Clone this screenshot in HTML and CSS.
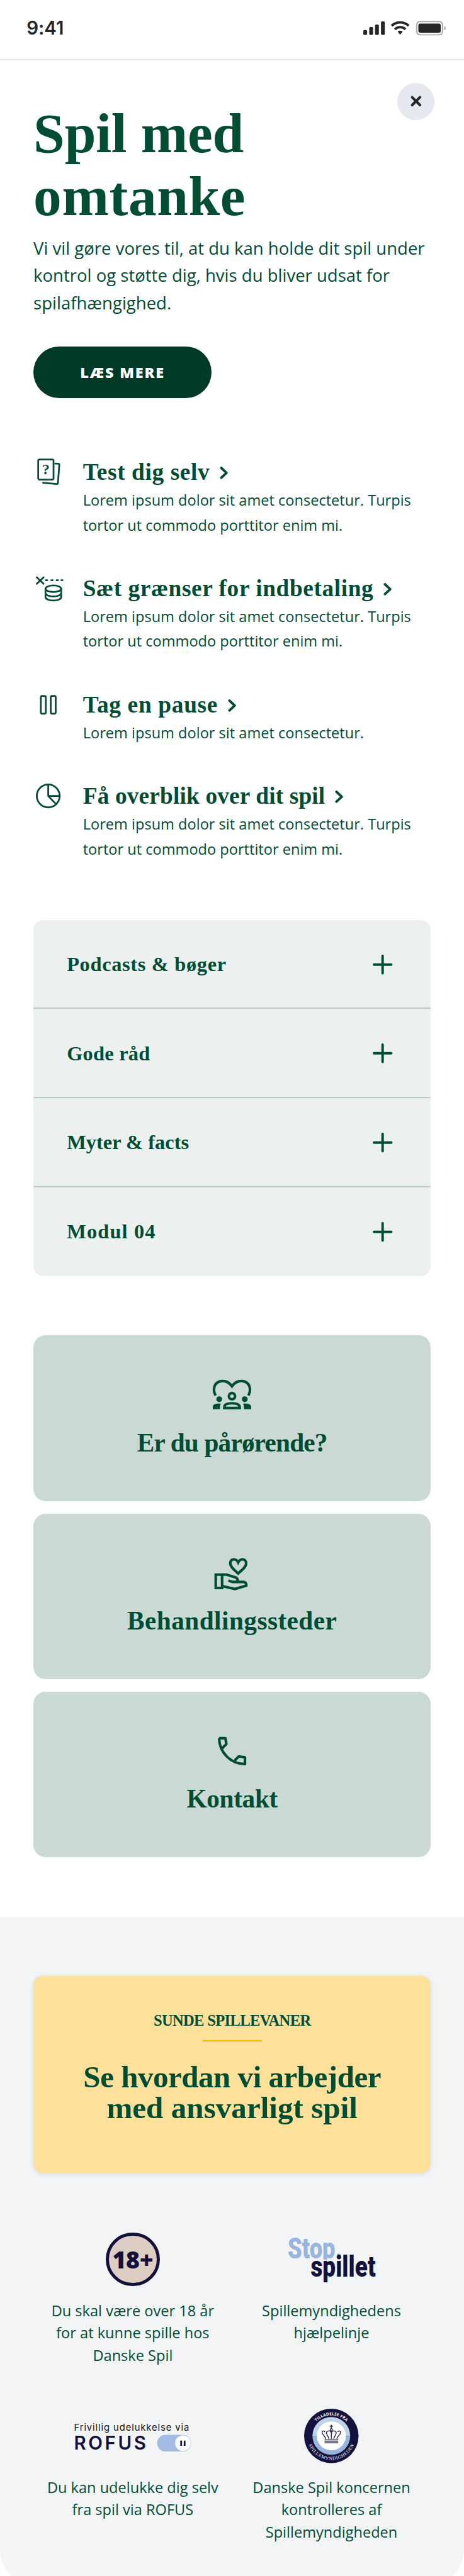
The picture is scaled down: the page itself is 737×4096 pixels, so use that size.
FILE: index.html
```html
<!DOCTYPE html>
<html lang="da">
<head>
<meta charset="utf-8">
<title>Spil med omtanke</title>
<link rel="stylesheet" href="styles.css">
</head>
<body>
<div class="page">
  <header class="status">
    <span class="time">9:41</span>
    <svg class="status-icons" viewBox="587 33 134 26" aria-hidden="true">
      <g fill="#262626">
        <rect x="587" y="49" width="6.2" height="8" rx="1.8"/>
        <rect x="596.6" y="44.3" width="6.2" height="12.7" rx="1.8"/>
        <rect x="606" y="40" width="6.2" height="17" rx="1.8"/>
        <rect x="615.6" y="35" width="6.2" height="22" rx="1.8"/>
        <path d="M642.4 51.6a6.2 6.2 0 0 1 8.4 0l-4.2 4.9z"/>
        <rect x="676" y="38.7" width="36.3" height="14.6" rx="3"/>
      </g>
      <g fill="none" stroke="#262626" stroke-width="4">
        <path d="M632.8 42.2a20 20 0 0 1 27.6 0"/>
        <path d="M638 47.8a12.4 12.4 0 0 1 17.2 0"/>
      </g>
      <rect x="673.3" y="35.2" width="41.9" height="21.6" rx="5.5" fill="none" stroke="#a9a9a9" stroke-width="2"/>
      <path d="M717.8 42.4c3.2 1.4 3.2 6 0 7.4z" fill="#a9a9a9"/>
    </svg>
  </header>

  <main class="content">
    <section class="hero">
      <div class="hero-top">
        <h1><span class="h1-a">Spil med</span><br><span class="h1-b">omtanke</span></h1>
        <button class="close" aria-label="Luk">
          <svg viewBox="0 0 18 18"><path d="M2.7 2.7 15.3 15.3M15.3 2.7 2.7 15.3"/></svg>
        </button>
      </div>
      <p class="lead">Vi vil gøre vores til, at du kan holde dit spil under kontrol og støtte dig, hvis du bliver udsat for spilafhængighed.</p>
      <a class="button">LÆS MERE</a>
    </section>

    <section class="links">
      <article class="link">
        <svg class="link-icon" viewBox="54 0 60 50">
          <rect x="61.8" y="3.6" width="24.8" height="32.6" rx="2"/>
          <path d="M89.3 10.2 94.6 10.6Q96 10.8 95.9 12.3L93.7 42Q93.5 43.4 92 43.3L69.7 41.3"/>
          <text x="74.2" y="27.4" text-anchor="middle">?</text>
        </svg>
        <div><h2><span class="t1">Test dig selv</span><svg class="chev" viewBox="0 0 14 20"><path d="M2.5 2 11 10 2.5 18"/></svg></h2>
        <p>Lorem ipsum dolor sit amet consectetur. Turpis tortor ut commodo porttitor enim mi.</p></div>
      </article>
      <article class="link">
        <svg class="link-icon" viewBox="54 0 60 50">
          <path d="M59.5 6 70.5 16.6M70.5 6 59.5 16.6"/>
          <path d="M74.3 10.7h2.2M83 10.7h2.2M91.5 10.7h2.2M99.3 10.7h1.7"/>
          <ellipse cx="86.3" cy="24.5" rx="12.7" ry="5.3"/>
          <path d="M73.6 24.5v13.5c0 7.5 25.4 7.5 25.4 0V24.5M73.6 31.3c0 7.5 25.4 7.5 25.4 0"/>
        </svg>
        <div><h2><span class="t2">Sæt grænser for indbetaling</span><svg class="chev" viewBox="0 0 14 20"><path d="M2.5 2 11 10 2.5 18"/></svg></h2>
        <p>Lorem ipsum dolor sit amet consectetur. Turpis tortor ut commodo porttitor enim mi.</p></div>
      </article>
      <article class="link">
        <svg class="link-icon" viewBox="54 0 60 50">
          <rect x="66.1" y="9.8" width="8" height="28.6" rx="2"/>
          <rect x="82.1" y="9.8" width="8" height="28.6" rx="2"/>
        </svg>
        <div><h2><span class="t3">Tag en pause</span><svg class="chev" viewBox="0 0 14 20"><path d="M2.5 2 11 10 2.5 18"/></svg></h2>
        <p>Lorem ipsum dolor sit amet consectetur.</p></div>
      </article>
      <article class="link">
        <svg class="link-icon" viewBox="54 0 60 50">
          <circle cx="78" cy="24" r="18.5"/>
          <path d="M78 5.5V24H96.5M78 24 90.7 37.3"/>
        </svg>
        <div><h2><span class="t4">Få overblik over dit spil</span><svg class="chev" viewBox="0 0 14 20"><path d="M2.5 2 11 10 2.5 18"/></svg></h2>
        <p>Lorem ipsum dolor sit amet consectetur. Turpis tortor ut commodo porttitor enim mi.</p></div>
      </article>
    </section>

    <section class="accordion">
      <div class="row"><span class="a1">Podcasts &amp; bøger</span><svg class="plus" viewBox="0 0 32 32"><path d="M16 2v28M2 16h28"/></svg></div>
      <div class="row"><span class="a2">Gode råd</span><svg class="plus" viewBox="0 0 32 32"><path d="M16 2v28M2 16h28"/></svg></div>
      <div class="row"><span class="a3">Myter &amp; facts</span><svg class="plus" viewBox="0 0 32 32"><path d="M16 2v28M2 16h28"/></svg></div>
      <div class="row"><span class="a4">Modul 04</span><svg class="plus" viewBox="0 0 32 32"><path d="M16 2v28M2 16h28"/></svg></div>
    </section>

    <section class="cards">
      <div class="card">
        <svg class="card-icon" viewBox="0 0 64 64">
          <path d="M5.5 33.5C-.5 22 4.5 10 17 10c6.5 0 11.5 3.5 15 8.6C35.5 13.5 40.5 10 47 10c12.5 0 17.5 12 11.5 23.5"/>
          <circle cx="32" cy="34.6" r="5"/>
          <path d="M19.6 53.8v-1.5c0-4.4 6-6.3 12.4-6.3s12.4 1.9 12.4 6.3v1.5z"/>
          <g class="solid">
            <circle cx="11.4" cy="39.5" r="4.7"/><circle cx="52.6" cy="39.5" r="4.7"/>
            <path d="M1 55.8v-3.8c0-4.5 5.5-6 13-5.3-1 2-1.4 4-1.4 6v3.1z"/>
            <path d="M63 55.8v-3.8c0-4.5-5.5-6-13-5.3 1 2 1.4 4 1.4 6v3.1z"/>
          </g>
        </svg>
        <h3 class="c1">Er du pårørende?</h3>
      </div>
      <div class="card">
        <svg class="card-icon" viewBox="0 0 64 64">
          <path d="M42 14.6C38.5 7.3 29.3 8.3 29.3 16.2 29.3 22 35.5 26.5 42 32.4 48.5 26.5 54.9 22 54.9 16.2 54.9 8.3 45.5 7.3 42 14.6z"/>
          <path d="M5.8 34.3H16V56H5.8z"/>
          <path d="M16 34.3h7.2L38 38.9c2.5.8 3.5 2.8 3.3 6.9M26.2 43.9l5.5 1.8q1.5.5 3.3.5H50.5c3 0 4.6 2 4.6 5.8L36.8 57.5 16 52.8"/>
        </svg>
        <h3 class="c2">Behandlingssteder</h3>
      </div>
      <div class="card">
        <svg class="card-icon" viewBox="0 0 64 64">
          <path class="round" d="M11.3 11H21.4L22.9 20.5 16.3 27.2M11.3 11C11.3 34 30 52.8 53 52.8V41.9L43 40.4 36.5 47"/>
        </svg>
        <h3 class="c3">Kontakt</h3>
      </div>
    </section>
  </main>

  <footer class="footer">
    <section class="promo">
      <p class="kicker">SUNDE SPILLEVANER</p>
      <hr>
      <h2><span class="p1">Se hvordan vi arbejder</span><br>med ansvarligt spil</h2>
    </section>
    <div class="badges">
      <div class="badge">
        <div class="logo"><div class="age">18+</div></div>
        <p>Du skal være over 18 år<br>for at kunne spille hos<br>Danske Spil</p>
      </div>
      <div class="badge">
        <div class="logo">
          <svg class="stop" viewBox="0 0 141 88">
            <clipPath id="cut"><rect width="141" height="44.4"/></clipPath>
            <text class="stop-a" x="0" y="42.5" textLength="88" lengthAdjust="spacingAndGlyphs" clip-path="url(#cut)">Stop.</text>
            <text class="stop-b" x="37" y="71.8" textLength="105" lengthAdjust="spacingAndGlyphs">spillet</text>
          </svg>
        </div>
        <p>Spillemyndighedens<br>hjælpelinje</p>
      </div>
      <div class="badge">
        <div class="logo rofus">
          <div class="rofus-top">Frivillig udelukkelse via</div>
          <div class="rofus-row"><span>ROFUS</span>
            <svg class="toggle" viewBox="0 0 56 28"><rect x=".5" y=".5" width="55" height="27" rx="13.5" fill="#a4bce4"/><circle cx="42.3" cy="14" r="12.6" fill="#fff"/><path d="M39.4 9.8v8.6M45 9.8v8.6" stroke="#14103c" stroke-width="2.8"/></svg>
          </div>
        </div>
        <p>Du kan udelukke dig selv<br>fra spil via ROFUS</p>
      </div>
      <div class="badge">
        <div class="logo">
          <svg class="seal" viewBox="0 0 88 88">
            <circle cx="44" cy="44" r="44" fill="#14123c"/>
            <path d="M13.5 44a30.5 30.5 0 0 1 61 0z" fill="#bfd2ea"/>
            <path d="M13.5 44a30.5 30.5 0 0 0 61 0z" fill="#97b5de"/>
            <circle cx="44" cy="44" r="23.5" fill="#fff"/>
            <path id="arc-top" d="M10.5 44a33.5 33.5 0 0 1 67 0" fill="none"/>
            <path id="arc-bottom" d="M5 44a39 39 0 0 0 78 0" fill="none"/>
            <text class="seal-top"><textPath href="#arc-top" startOffset="50%" textLength="54">TILLADELSE FRA</textPath></text>
            <text class="seal-bottom"><textPath href="#arc-bottom" startOffset="50%" textLength="93">SPILLEMYNDIGHEDEN</textPath></text>
            <g fill="none" stroke="#14123c" stroke-width="1.3">
              <path d="M44 26v6M41.3 28.3h5.4M44 36v13M33 50.5h22M33 52.8h22M33 55h22"/>
              <circle cx="44" cy="34" r="1.8"/>
              <path d="M35 49C35 45 29 42 29 38.5c0-3 4-3.5 4.5-.7M40 49c0-4-4-6.5-4-10 0-3.5 5.5-4.5 7.5-1M53 49c0-4 6-7 6-10.5 0-3-4-3.5-4.5-.7M48 49c0-4 4-6.500 4-10 0-3.500-5.500-4.500-7.500-1"/>
            </g>
          </svg>
        </div>
        <p>Danske Spil koncernen<br>kontrolleres af<br>Spillemyndigheden</p>
      </div>
    </div>
  </footer>
</div>
</body>
</html>
```
FILE: styles.css
```css
* { box-sizing: border-box; margin: 0; padding: 0; }
html, body { background: #fff; overflow: hidden; }
svg { display: block; overflow: visible; }

.page {
  zoom: 0.98317;
  width: 750px;
  height: 4166px;
  display: flex;
  flex-direction: column;
  color: #004d34;
  font-family: "Open Sans", "Noto Sans", sans-serif;
}
h1, h2, h3, .row, .kicker { font-family: "Liberation Serif", serif; font-weight: 700; }

/* Status bar */
.status {
  flex: none;
  height: 98px;
  padding: 0 29px 6px 43px;
  border-bottom: 2.1px solid #e1e5e9;
  display: flex;
  align-items: center;
  justify-content: space-between;
}
.time { font: 600 30px/36px Inter, sans-serif; color: #262626; letter-spacing: -.1px; }
.status-icons { width: 134px; height: 26px; margin-top: 2px; }

.content { flex: none; padding: 0 54px; height: 3002px; }

/* Intro */
.hero { padding-top: 36px; }
.hero-top { display: flex; justify-content: space-between; }
h1 { font-size: 91px; line-height: 102px; padding-top: 30.6px; }
.h1-a { letter-spacing: -.2px; }
.h1-b { letter-spacing: .6px; }
.close {
  width: 60px;
  height: 60px;
  margin-right: -6px;
  border: 0;
  border-radius: 50%;
  background: #e5e8ef;
  display: grid;
  place-items: center;
}
.close svg { width: 18px; stroke: #262626; stroke-width: 4.2; stroke-linecap: round; }
.lead { margin-top: 10.9px; font-size: 28px; line-height: 44px; width: 650px; }
.button {
  margin-top: 48.5px;
  width: 288px;
  height: 84px;
  border-radius: 42px;
  background: #003926;
  color: #fff;
  font-size: 24px;
  font-weight: 800;
  letter-spacing: 1.81px;
  display: flex;
  align-items: center;
  justify-content: center;
}

/* Link list */
.links { margin-top: 101.6px; display: flex; flex-direction: column; gap: 64px; }
.link { display: flex; gap: 20px; }
.link-icon {
  flex: none;
  width: 60px;
  height: 50px;
  margin: -6px 0 -10px;
  fill: none;
  stroke: #004d34;
  stroke-width: 2.8;
  stroke-linecap: round;
  stroke-linejoin: round;
}
.link-icon text { font: 700 24px "Liberation Serif", serif; fill: #004d34; stroke: none; }
.link h2 { font-size: 38px; line-height: 37px; height: 44px; display: flex; white-space: nowrap; }
.link p { font-size: 24px; line-height: 40px; width: 545px; }
.chev {
  width: 14px;
  height: 20px;
  margin: 9px 0 0 16px;
  fill: none;
  stroke: #004d34;
  stroke-width: 4;
  stroke-linecap: round;
  stroke-linejoin: round;
}
.t1 { letter-spacing: .61px; }
.t2 { letter-spacing: .59px; }
.t3 { letter-spacing: .69px; }
.t4 { letter-spacing: .14px; }

/* Accordion */
.accordion { margin-top: 94.4px; border-radius: 16px; background: #ecf0ef; overflow: hidden; }
.row {
  height: 144px;
  padding: 0 62px 0 54px;
  display: flex;
  align-items: center;
  justify-content: space-between;
  font-size: 33px;
}
.row:not(:last-child) { border-bottom: 2.1px solid #b9cdc6; padding-top: 2px; }
.plus { width: 32px; height: 32px; fill: none; stroke: #004d34; stroke-width: 4; stroke-linecap: round; }
.a1 { letter-spacing: .66px; }
.a2 { letter-spacing: .2px; }
.a4 { letter-spacing: 1.15px; }

/* Cards */
.cards { margin-top: 96px; display: grid; gap: 20px; }
.card {
  height: 268px;
  padding-top: 64px;
  border-radius: 20px;
  background: #cad9d3;
  display: flex;
  flex-direction: column;
  align-items: center;
}
.card-icon { width: 64px; height: 64px; fill: none; stroke: #004d34; stroke-width: 4.2; }
.card-icon .solid { fill: #004d34; stroke: none; }
.card-icon .round { stroke-linejoin: round; }
.card h3 { margin-top: 22px; font-size: 42px; line-height: 48px; }
.c1 { letter-spacing: -.83px; }
.c2 { letter-spacing: .45px; }
.c3 { letter-spacing: -.34px; }

/* Footer */
.footer { flex: 1; padding: 96px 54px 0; background: #f2f4f6; border-radius: 0 0 60px 60px; }
.promo {
  height: 318px;
  padding-top: 55.6px;
  border-radius: 16px;
  background: #fde19b;
  box-shadow: 0 2px 8px rgba(20, 40, 70, .12);
  text-align: center;
}
.kicker { font-size: 25px; line-height: 32px; letter-spacing: -.68px; }
.promo hr { width: 96px; height: 2px; margin: 16.4px auto 32px; border: 0; background: #ffb800; }
.promo h2 { font-size: 50px; line-height: 50px; }
.p1 { letter-spacing: -.55px; }

.badges { margin-top: 96px; display: grid; grid-template-columns: 1fr 1fr; grid-auto-rows: 286px; }
.badge { text-align: center; }
.badge p { margin-top: 21.4px; font-size: 24px; line-height: 36px; white-space: nowrap; }
.logo { height: 88px; display: flex; flex-direction: column; align-items: center; justify-content: center; }
.age {
  width: 87px;
  height: 87px;
  border: 5.2px solid #14103c;
  border-radius: 50%;
  background: #ddcdc2;
  color: #14103c;
  font-size: 38px;
  font-weight: 800;
  letter-spacing: -.3px;
  display: flex;
  align-items: center;
  justify-content: center;
}
.stop { width: 141px; height: 88px; }
.stop text { font: 900 47px Roboto, sans-serif; }
.stop-a { fill: #97b5de; }
.stop-b { fill: #14103c; }
.rofus { align-items: stretch; justify-content: flex-start; width: 190px; margin: 0 auto; padding-top: 21px; }
.rofus-top { font: 400 15px/20px Inter, sans-serif; letter-spacing: .94px; color: #111; text-align: left; white-space: nowrap; }
.rofus-row { display: flex; align-items: center; justify-content: space-between; }
.rofus-row span { font: 600 30px/28px Inter, sans-serif; letter-spacing: 3.63px; color: #14103c; }
.toggle { width: 56px; height: 28px; }
.seal { width: 88px; height: 88px; }
.seal text { fill: #fff; text-anchor: middle; }
.seal-top { font: 700 6.5px "Open Sans", sans-serif; }
.seal-bottom { font: 400 7.5px "Liberation Serif", serif; }
```
